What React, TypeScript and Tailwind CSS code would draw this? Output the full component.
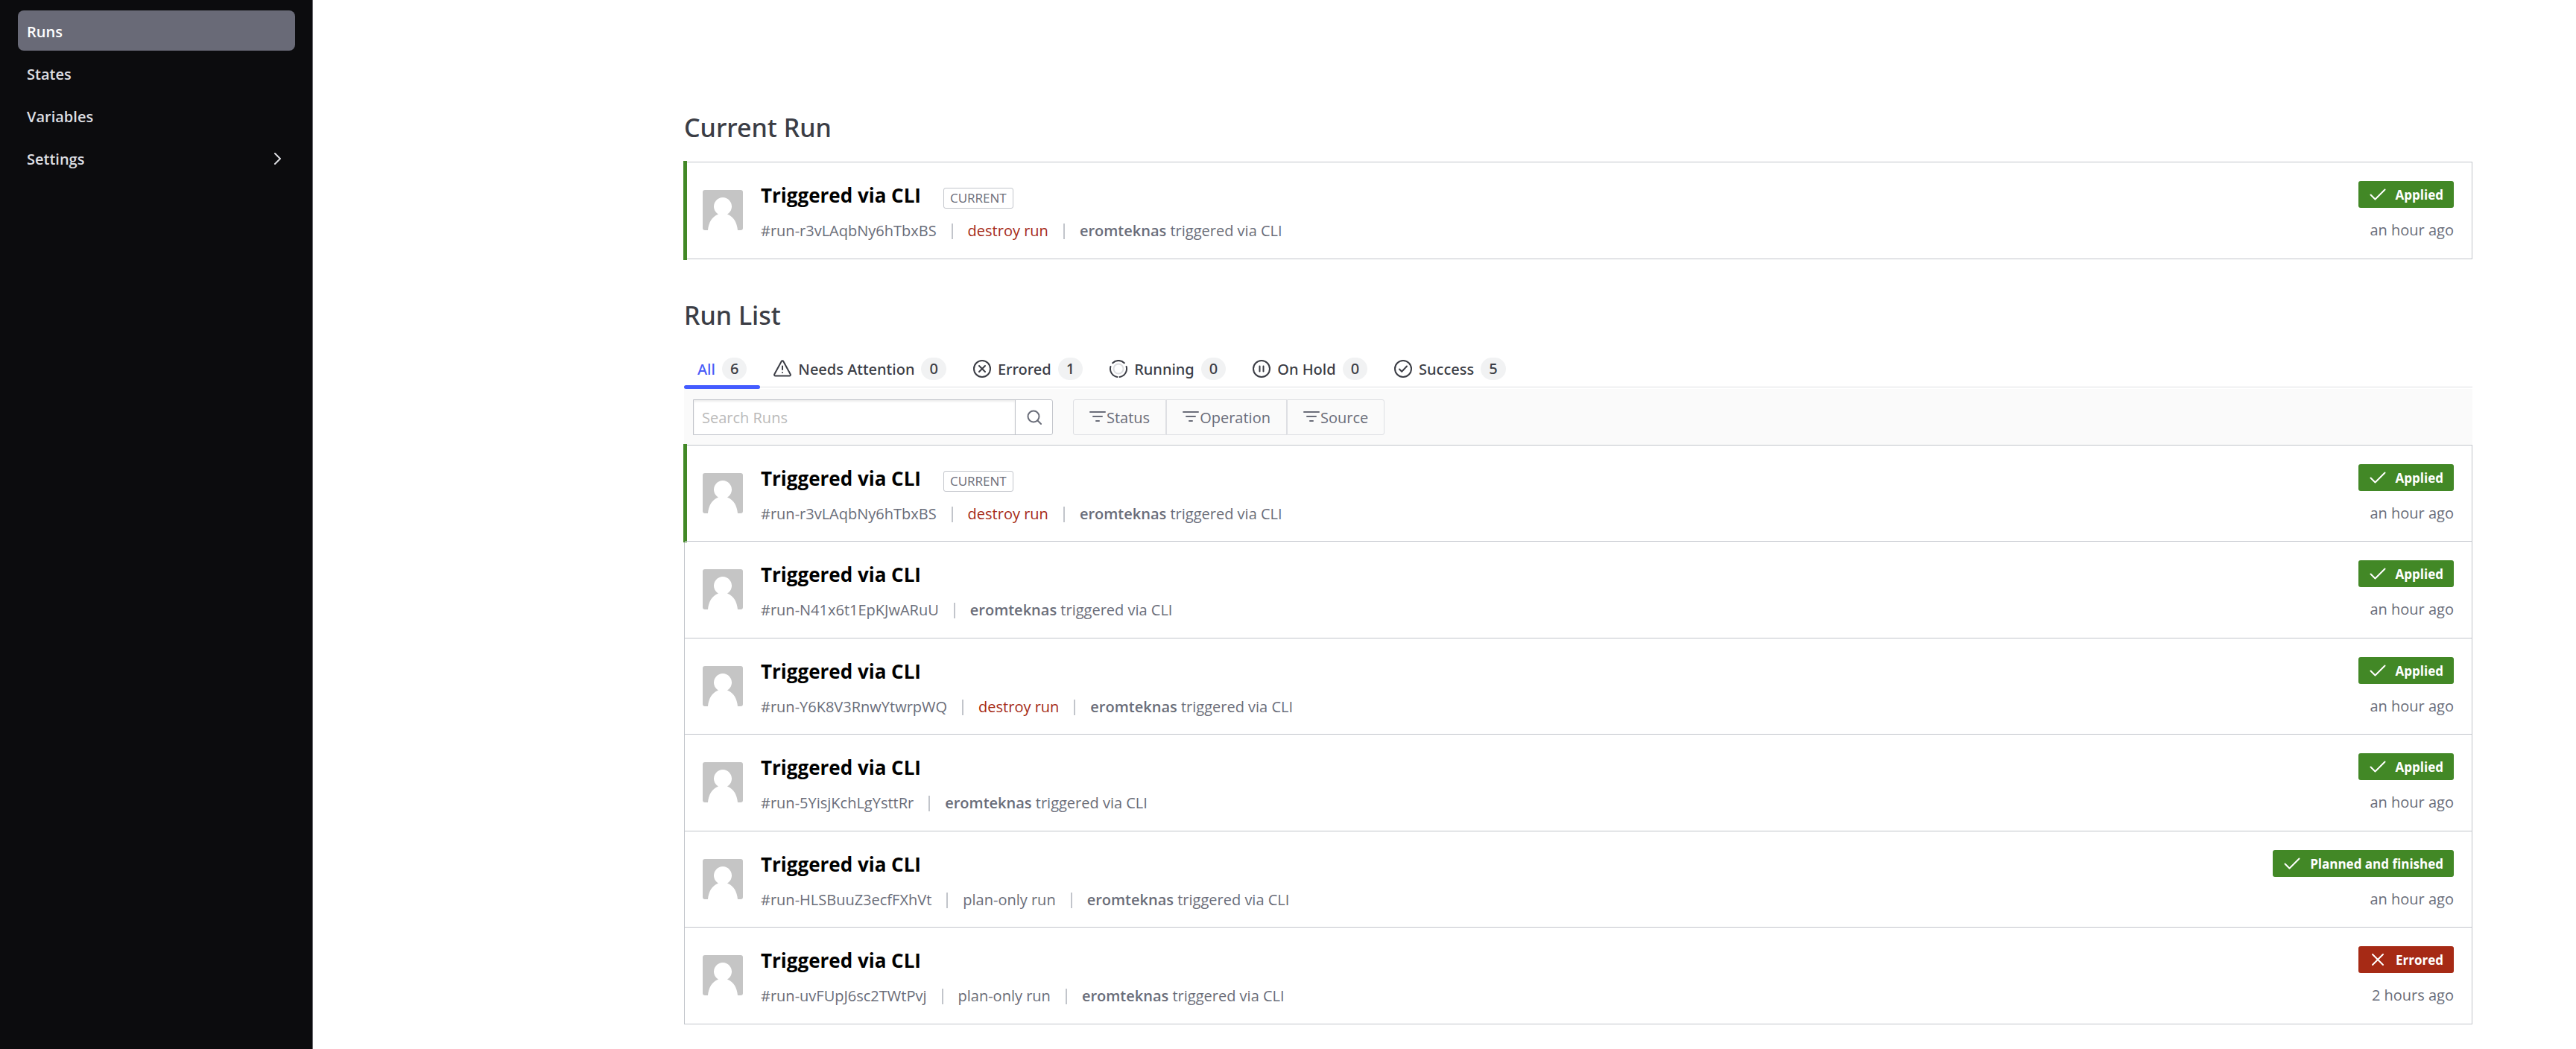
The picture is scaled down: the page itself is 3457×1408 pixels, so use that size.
import React from "react";

type Run = {
  id: string;
  kind?: "destroy run" | "plan-only run";
  status: "Applied" | "Planned and finished" | "Errored";
  time: string;
  current?: boolean;
};

const runs: Run[] = [
  { id: "#run-r3vLAqbNy6hTbxBS", kind: "destroy run", status: "Applied", time: "an hour ago", current: true },
  { id: "#run-N41x6t1EpKJwARuU", status: "Applied", time: "an hour ago" },
  { id: "#run-Y6K8V3RnwYtwrpWQ", kind: "destroy run", status: "Applied", time: "an hour ago" },
  { id: "#run-5YisjKchLgYsttRr", status: "Applied", time: "an hour ago" },
  { id: "#run-HLSBuuZ3ecfFXhVt", kind: "plan-only run", status: "Planned and finished", time: "an hour ago" },
  { id: "#run-uvFUpJ6sc2TWtPvj", kind: "plan-only run", status: "Errored", time: "2 hours ago" },
];

const stroke = {
  fill: "none",
  stroke: "currentColor",
  strokeWidth: 2,
  strokeLinecap: "round" as const,
  strokeLinejoin: "round" as const,
  "aria-hidden": true,
};

const WarningIcon = () => (
  <svg viewBox="0 0 24 24" className="size-6" {...stroke}>
    <path d="M10.6 2.2 1.3 19.2a1.6 1.6 0 0 0 1.4 2.4h18.6a1.6 1.6 0 0 0 1.4-2.4L13.4 2.2a1.6 1.6 0 0 0-2.8 0ZM12 8.5V13M12 16.9v.2" />
  </svg>
);
const ErroredIcon = () => (
  <svg viewBox="0 0 24 24" className="size-6" {...stroke}>
    <circle cx="12" cy="12" r="11" />
    <path d="m8 8 8 8M16 8l-8 8" />
  </svg>
);
const RunningIcon = () => (
  <svg viewBox="0 0 24 24" className="size-6" {...stroke}>
    <circle cx="12" cy="12" r="6.5" className="stroke-[#dcdde0]" />
    <path d="M4.2 4.2a11 11 0 0 1 15.6 0M22.6 9a11 11 0 0 1-9 13.9M1.4 9a11 11 0 0 0 9 13.9" />
  </svg>
);
const HoldIcon = () => (
  <svg viewBox="0 0 24 24" className="size-6" {...stroke}>
    <circle cx="12" cy="12" r="11" />
    <path d="M9.5 8.5v7M14.5 8.5v7" />
  </svg>
);
const SuccessIcon = () => (
  <svg viewBox="0 0 24 24" className="size-6" {...stroke}>
    <circle cx="12" cy="12" r="11" />
    <path d="m7 12.5 3.200 3.200L17 8.500" />
  </svg>
);
const FilterIcon = () => (
  <svg viewBox="0 0 22 18" className="h-[18px] w-[22px]" {...stroke}>
    <path d="M1 2h20M5 8h12M9 14h4" />
  </svg>
);

const tabs = [
  { label: "All", count: 6, icon: null },
  { label: "Needs Attention", count: 0, icon: <WarningIcon /> },
  { label: "Errored", count: 1, icon: <ErroredIcon /> },
  { label: "Running", count: 0, icon: <RunningIcon /> },
  { label: "On Hold", count: 0, icon: <HoldIcon /> },
  { label: "Success", count: 5, icon: <SuccessIcon /> },
];

function Avatar() {
  return (
    <svg viewBox="0 0 54 54" className="mt-[37px] size-[54px] shrink-0 rounded-[3px]" role="img" aria-label="eromteknas">
      <rect width="54" height="54" fill="#c5c5c5" />
      <path d="M7 54c1-10 5-18 14-21.500a12 12 0 1 1 12 0C42 36 46 44 47 54Z" fill="#fff" />
    </svg>
  );
}

function StatusBadge({ status }: { status: Run["status"] }) {
  const failed = status === "Errored";
  return (
    <span
      className={`flex h-9 items-center rounded-[3px] pr-[14px] pl-[15px] text-[17px] font-bold text-white ${failed ? "bg-[#a62a15]" : "bg-[#428826]"}`}
    >
      <svg viewBox="0 0 22 22" className="mr-[13px] size-[22px]" {...stroke}>
        {failed ? <path d="m4 4 14 14M18 4 4 18" /> : <path d="m1.500 11.500 6 6L20.500 4.500" />}
      </svg>
      <span className="pt-0.5">{status}</span>
    </span>
  );
}

function Divider() {
  return <span className="mx-5 h-[21px] w-0.5 bg-[#c2c5cb]" />;
}

function RunRow({ run }: { run: Run }) {
  return (
    <li className="relative flex min-h-[129px] border-t border-[#c2c5cb] px-6 only:min-h-[130px] even:min-h-[130px]">
      {run.current && <span className="absolute -top-0.5 -bottom-0.5 -left-0.5 w-[5px] bg-[#428826]" />}
      <Avatar />
      <div className="ml-6 flex flex-col pt-[26px]">
        <div className="flex h-9 items-center">
          <a href="#run" className="text-[26px] font-bold text-black">Triggered via CLI</a>
          {run.current && (
            <span className="ml-[30px] flex h-7 items-center self-end rounded-[3px] border border-[#c2c5cb] px-2 text-[17px] text-[#6a6d79]">
              CURRENT
            </span>
          )}
        </div>
        <div className="mt-[15px] flex h-[30px] items-center text-[#6a6d79]">
          <span>{run.id}</span>
          <Divider />
          {run.kind && (
            <>
              <span className={run.kind === "destroy run" ? "text-[#a62a15]" : ""}>{run.kind}</span>
              <Divider />
            </>
          )}
          <span><b className="font-semibold">eromteknas</b> triggered via CLI</span>
        </div>
      </div>
      <div className="ml-auto flex flex-col items-end pt-[25px]">
        <StatusBadge status={run.status} />
        <time className="mt-[15px] leading-[30px] text-[#6a6d79]">{run.time}</time>
      </div>
    </li>
  );
}

export default function App() {
  return (
    <div className="flex min-h-screen bg-white font-['Open_Sans','Noto_Sans',sans-serif] text-[20px] text-[#3b3d45]">
      <nav className="w-[420px] shrink-0 border-r border-[#6b6b70] bg-[#0c0c0e] pt-[14px] pr-[23px] pl-6" aria-label="Workspace">
        <ul className="flex flex-col gap-[3px] font-semibold text-[#dedfe3]">
          {["Runs", "States", "Variables", "Settings"].map((item) => (
            <li key={item}>
              <a
                href={`#${item.toLowerCase()}`}
                className={`flex h-[54px] items-center justify-between rounded-lg pt-[3px] pr-[14px] pl-3 ${item === "Runs" ? "bg-[#696a77] text-white" : ""}`}
              >
                {item}
                {item === "Settings" && (
                  <svg viewBox="0 0 18 18" className="size-[18px]" {...stroke}>
                    <path d="m5 1 7 7-7 7" />
                  </svg>
                )}
              </a>
            </li>
          ))}
        </ul>
      </nav>

      <main className="min-w-0 flex-1 pt-[146px] pr-[139px] pb-[33px] pl-[498px]">
        <section>
          <h1 className="font-['Noto_Sans',sans-serif] text-[34px] leading-[50px] font-medium">Current Run</h1>
          <ul className="mt-[21px] border-x border-b border-[#c2c5cb]">
            <RunRow run={runs[0]} />
          </ul>
        </section>

        <section className="mt-[50px]">
          <h2 className="font-['Noto_Sans',sans-serif] text-[34px] leading-[50px] font-medium">Run List</h2>
          <div role="tablist" className="mt-5 flex h-[52px] border-b border-[#dedfe3] font-['Noto_Sans',sans-serif]">
            {tabs.map((tab, i) => (
              <button
                key={tab.label}
                role="tab"
                aria-selected={i === 0}
                className={`relative flex items-center px-[18px] pt-0.5 font-medium ${i === 0 ? "text-[#4a5cf7]" : ""}`}
              >
                {tab.icon && <span className="mr-[9px]">{tab.icon}</span>}
                <span className="pt-0.5">{tab.label}</span>
                <span className="ml-[9px] flex h-[30px] items-center rounded-full bg-[#f1f2f3] px-[11px] text-[#3b3d45]">
                  {tab.count}
                </span>
                {i === 0 && <span className="absolute inset-x-0 -bottom-[3px] h-[5px] rounded-[3px] bg-[#445cff]" />}
              </button>
            ))}
          </div>
          <div className="mt-0.5 flex h-[75px] items-center bg-[#fafafa] px-3 text-[#6a6d79]">
            <form className="flex h-12 w-[483px] overflow-hidden rounded-r-[3px] border border-[#c2c5cb] bg-white" onSubmit={(e) => e.preventDefault()}>
              <input
                aria-label="Search Runs"
                placeholder="Search Runs"
                className="min-w-0 flex-1 px-[11px] pt-0.5 shadow-[inset_0_2px_3px_rgba(0,0,0,0.08)] outline-none placeholder:text-[#bababa]"
              />
              <button aria-label="Search" className="flex w-[50px] items-center justify-center border-l border-[#c2c5cb]">
                <svg viewBox="0 0 20 20" className="size-5" {...stroke}>
                  <circle cx="9" cy="9" r="7.500" />
                  <path d="m14.500 14.500 4.500 4.500" />
                </svg>
              </button>
            </form>
            <div className="ml-[27px] flex h-12">
              {["Status", "Operation", "Source"].map((f) => (
                <button key={f} className="flex items-center gap-px border border-[#dedfe3] px-[21px] first:rounded-l-[3px] last:rounded-r-[3px]">
                  <FilterIcon />
                  <span className="pt-0.5">{f}</span>
                </button>
              ))}
            </div>
          </div>
          <ul className="border-x border-b border-[#c2c5cb]">
            {runs.map((run) => (
              <RunRow key={run.id} run={run} />
            ))}
          </ul>
        </section>
      </main>
    </div>
  );
}
